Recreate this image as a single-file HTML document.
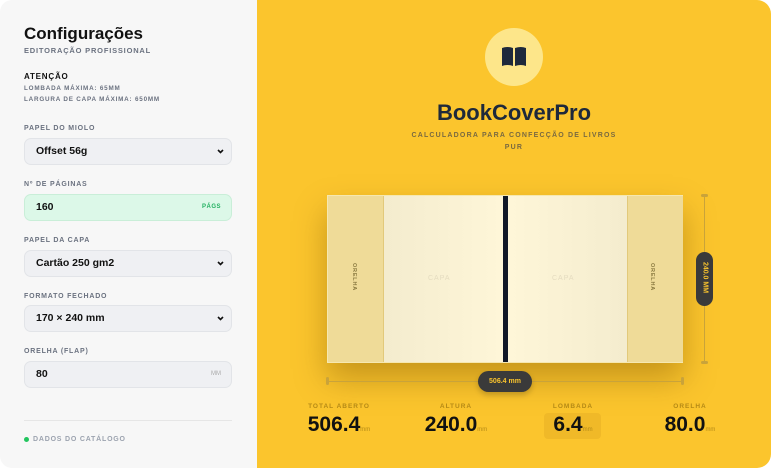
<!DOCTYPE html>
<html><head><meta charset="utf-8"><style>
*{box-sizing:border-box;margin:0;padding:0}
body{width:771px;height:468px;background:#fff;font-family:"Liberation Sans",sans-serif;position:relative;overflow:hidden}
.left{position:absolute;left:0;top:0;width:257px;height:468px;background:#f7f7f7;border-radius:12px 0 0 12px}
.right{position:absolute;left:257px;top:0;width:514px;height:468px;background:#fbc52d;border-radius:0 14px 14px 0}
.a{position:absolute}
.lbl{position:absolute;left:24px;font-size:7px;font-weight:bold;letter-spacing:.8px;color:#6b7280}
.fld{position:absolute;left:24px;width:208px;height:27px;border:1px solid #e2e4e8;border-radius:7px;background:#eff0f3;font-size:10.5px;font-weight:bold;color:#111;padding-left:11px;line-height:25px}
.chev{position:absolute;right:7px;top:10px}
.stat{position:absolute;top:0;width:110px;text-align:center}
.sl{font-size:6.5px;color:#b58a16;letter-spacing:1px;font-weight:bold;position:absolute;top:403px;width:100%}
.sv{position:absolute;top:413px;width:100%;font-size:21px;font-weight:bold;color:#111}
.sv small{font-size:6px;color:#b58a16;font-weight:normal}
.ore{position:absolute;font-size:5.5px;color:#8a7a40;letter-spacing:.8px;transform:rotate(90deg);font-weight:bold}
</style></head><body>
<div class="left">
<div class="a" style="left:24px;top:24px;font-size:17px;font-weight:bold;color:#111">Configurações</div>
<div class="lbl" style="top:46px;font-size:7.5px">EDITORAÇÃO PROFISSIONAL</div>
<div class="a" style="left:24px;top:72px;font-size:8px;font-weight:bold;letter-spacing:.8px;color:#111">ATENÇÃO</div>
<div class="lbl" style="top:85px;font-size:6.3px">LOMBADA MÁXIMA: 65MM</div>
<div class="lbl" style="top:96px;font-size:6.3px">LARGURA DE CAPA MÁXIMA: 650MM</div>
<div class="lbl" style="top:125px">PAPEL DO MIOLO</div>
<div class="fld" style="top:138px">Offset 56g<svg class="chev" width="7" height="5" viewBox="0 0 7 5"><path d="M1 1 L3.5 3.5 L6 1" stroke="#111" stroke-width="1.6" fill="none"/></svg></div>
<div class="lbl" style="top:181px">Nº DE PÁGINAS</div>
<div class="fld" style="top:194px;background:#dcf8e8;border-color:#c9eed8">160<span class="a" style="right:10px;font-size:6px;color:#22b060;letter-spacing:.5px">PÁGS</span></div>
<div class="lbl" style="top:237px">PAPEL DA CAPA</div>
<div class="fld" style="top:250px">Cartão 250 gm2<svg class="chev" width="7" height="5" viewBox="0 0 7 5"><path d="M1 1 L3.5 3.5 L6 1" stroke="#111" stroke-width="1.6" fill="none"/></svg></div>
<div class="lbl" style="top:293px">FORMATO FECHADO</div>
<div class="fld" style="top:305px">170 × 240 mm<svg class="chev" width="7" height="5" viewBox="0 0 7 5"><path d="M1 1 L3.5 3.5 L6 1" stroke="#111" stroke-width="1.6" fill="none"/></svg></div>
<div class="lbl" style="top:348px">ORELHA (FLAP)</div>
<div class="fld" style="top:361px">80<span class="a" style="right:10px;font-size:6px;color:#aaa;font-weight:normal">MM</span></div>
<div class="a" style="left:24px;top:420px;width:208px;height:1px;background:#e6e6e6"></div>
<div class="a" style="left:24px;top:437px;width:5px;height:5px;border-radius:50%;background:#22c55e"></div>
<div class="lbl" style="left:33px;top:436px;color:#9ca3af">DADOS DO CATÁLOGO</div>
</div>
<div class="right">
<div class="a" style="left:228px;top:28px;width:58px;height:58px;border-radius:50%;background:#fde68a"></div>
<svg class="a" style="left:244px;top:46px" width="26" height="22" viewBox="0 0 26 22"><path d="M1 2 Q6 0 12 2 V20 Q6 18 1 20Z M14 2 Q20 0 25 2 V20 Q20 18 14 20Z" fill="#1e293b"/></svg>
<div class="a" style="left:0;width:514px;top:100px;text-align:center;font-size:22px;font-weight:bold;color:#1e293b">BookCoverPro</div>
<div class="a" style="left:0;width:514px;top:130px;text-align:center;font-size:7px;font-weight:bold;letter-spacing:1.2px;color:#7a6a40;line-height:12px">CALCULADORA PARA CONFECÇÃO DE LIVROS<br>PUR</div>
<div class="a" style="left:70px;top:195px;width:356px;height:168px;box-shadow:0 16px 30px rgba(120,80,0,.4);border:1px solid #f6e8b0">
<div class="a" style="left:0;top:0;width:56px;height:166px;background:#efdb98;border-right:1px solid #e2c97a"></div>
<div class="a" style="left:56px;top:0;width:119px;height:166px;background:linear-gradient(90deg,#f4ecce,#fef6d8)"></div>
<div class="a" style="left:175px;top:0;width:5px;height:166px;background:#111827"></div>
<div class="a" style="left:180px;top:0;width:119px;height:166px;background:linear-gradient(90deg,#fef6d8,#f4ecce)"></div>
<div class="a" style="left:299px;top:0;width:56px;height:166px;background:#efdb98;border-left:1px solid #e2c97a"></div>
<div class="a" style="left:100px;top:79px;font-size:7px;color:#e5dcc0;letter-spacing:1px">CAPA</div>
<div class="a" style="left:224px;top:79px;font-size:7px;color:#e5dcc0;letter-spacing:1px">CAPA</div>
<div class="ore" style="left:12px;top:78px">ORELHA</div>
<div class="ore" style="left:310px;top:78px">ORELHA</div>
</div>
<div class="a" style="left:447px;top:195px;width:1px;height:168px;background:#c9a33a"></div>
<div class="a" style="left:444px;top:194px;width:7px;height:3px;border-radius:2px;background:#c9a33a"></div>
<div class="a" style="left:444px;top:361px;width:7px;height:3px;border-radius:2px;background:#c9a33a"></div>
<div class="a" style="left:439px;top:252px;width:17px;height:54px;border-radius:9px;background:#3a3a3a"><div class="a" style="left:-16px;top:22px;width:50px;text-align:center;transform:rotate(90deg);font-size:7px;font-weight:bold;color:#fbc52d">240.0 MM</div></div>
<div class="a" style="left:70px;top:381px;width:356px;height:1px;background:#c9a33a"></div>
<div class="a" style="left:69px;top:377px;width:3px;height:8px;border-radius:2px;background:#c9a33a"></div>
<div class="a" style="left:424px;top:377px;width:3px;height:8px;border-radius:2px;background:#c9a33a"></div>
<div class="a" style="left:221px;top:371px;width:54px;height:21px;border-radius:11px;background:#3a3a3a;color:#fbc52d;font-size:7px;font-weight:bold;text-align:center;line-height:21px;box-shadow:0 3px 6px rgba(0,0,0,.2)">506.4 mm</div>
<div class="stat" style="left:27px"><div class="sl">TOTAL ABERTO</div><div class="sv">506.4<small>mm</small></div></div>
<div class="stat" style="left:144px"><div class="sl">ALTURA</div><div class="sv">240.0<small>mm</small></div></div>
<div class="a" style="left:287px;top:413px;width:57px;height:26px;border-radius:4px;background:#f0b928"></div>
<div class="stat" style="left:261px"><div class="sl">LOMBADA</div><div class="sv">6.4<small>mm</small></div></div>
<div class="stat" style="left:378px"><div class="sl">ORELHA</div><div class="sv">80.0<small>mm</small></div></div>
</div>
</body></html>
